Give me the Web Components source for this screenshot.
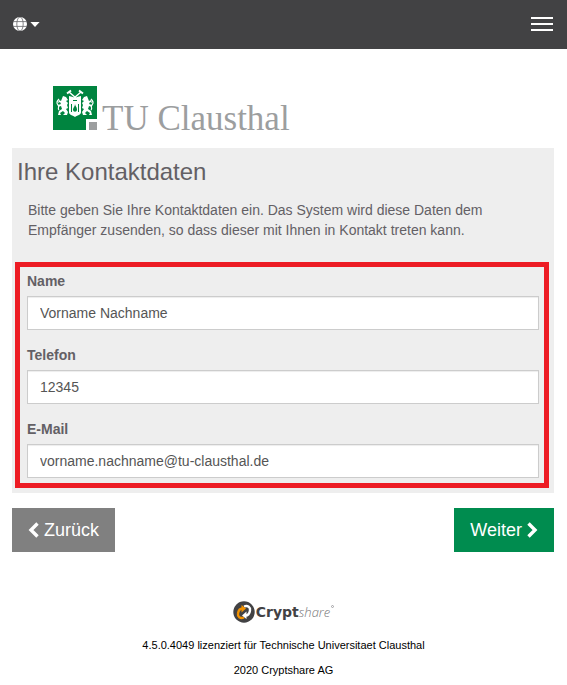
<!DOCTYPE html>
<html lang="de">
<head>
<meta charset="utf-8">
<meta name="viewport" content="width=device-width, initial-scale=1">
<title>Ihre Kontaktdaten</title>
<style>
  body {
    margin: 0;
    background: #fff;
    color: #636065;
    font: 14px/20px "Liberation Sans", Arial, sans-serif;
  }
</style>
</head>
<body>
<contact-page></contact-page>

<script>
class NavBar extends HTMLElement {
  constructor() {
    super();
    this.attachShadow({ mode: 'open' }).innerHTML = `
      <style>
        :host {
          display: flex;
          align-items: center;
          justify-content: space-between;
          height: 48px;
          padding: 0 14px 1px 13px;
          background: #424244;
        }
        button {
          display: flex;
          align-items: center;
          gap: 3px;
          margin: 0;
          padding: 0;
          border: 0;
          background: none;
          cursor: pointer;
        }
        svg { display: block; }
      </style>
      <button type="button" aria-label="Sprache">
        <svg width="14" height="14" viewBox="0 0 14 14">
          <circle cx="7" cy="7" r="7" fill="#fff"/>
          <g fill="none" stroke="#66666a" stroke-width=".8">
            <path d="M0 4.600h14M0 9.400h14"/>
            <ellipse cx="7" cy="7" rx="3.200" ry="7"/>
          </g>
        </svg>
        <svg width="10" height="5" viewBox="0 0 10 5"><path d="M.4 0h9.200L5 5z" fill="#fff"/></svg>
      </button>
      <button type="button" aria-label="Menü">
        <svg width="22" height="14" viewBox="0 0 22 14">
          <path d="M0 1h22M0 7h22M0 13h22" stroke="#fff" stroke-width="2"/>
        </svg>
      </button>
    `;
  }
}
customElements.define('nav-bar', NavBar);

class UniLogo extends HTMLElement {
  constructor() {
    super();
    this.attachShadow({ mode: 'open' }).innerHTML = `
      <style>
        :host {
          display: flex;
          align-items: flex-end;
          gap: 5px;
          height: 44px;
          color: #9c9e9f;
          font: 35px/22px "Liberation Serif", "Times New Roman", serif;
          white-space: nowrap;
        }
        svg { flex: none; display: block; }
      </style>
      <svg width="44" height="44" viewBox="0 0 44 44">
        <path fill="#00843f" d="M0 0h44v33H33v11H0z"/>
        <path fill="#9c9e9f" d="M36 36h8v8h-8z"/>
        <!-- crossed hammers -->
        <g fill="none" stroke="#fff" stroke-width="1.500">
          <path d="M16 6l7 6M28 6l-7 6"/>
          <path stroke-width="2" d="M14 7.500l4-3M30 7.500l-4-3"/>
        </g>
        <!-- shield -->
        <path fill="#fff" d="M16 10l4 1 2 1 2-1 4-1v16c0 3-3 3-6 5c-3-2-6-2-6-5z"/>
        <path fill="#00843f" d="M18 18h1v8h-1zM25 18h1v8h-1zM20 14h4v1h-4zM22 18c0 2 2 3 2 5.500c0 3-4 3-4 0c0-2 2-3 2-5.500z"/>
        <!-- lions on both sides -->
        <g id="lion">
          <path fill="#fff" d="M10 10l3 1 2 3-2 1 2 2-1 2 1 3-2 1 2 3-1 3h-4l2-2-2-2-3 2 1 2H5l1-4 3-2-1-3-3 1v-2l3-1-1-2-2 1 1-3 2 1z"/>
          <path fill="none" stroke="#fff" stroke-width="1.200" d="M6 24c-2-2 1-3-1-5s-1-4 1-6"/>
        </g>
        <use href="#lion" transform="translate(44 0) scale(-1 1)"/>
      </svg>
      <span><slot></slot></span>
    `;
  }
}
customElements.define('uni-logo', UniLogo);

class TextField extends HTMLElement {
  connectedCallback() {
    this.attachShadow({ mode: 'open' }).innerHTML = `
      <style>
        :host { display: block; }
        label {
          display: block;
          margin-bottom: 5px;
          font-weight: bold;
        }
        input {
          display: block;
          box-sizing: border-box;
          width: 100%;
          height: 34px;
          margin: 0;
          padding: 6px 12px;
          border: 1px solid #ccc;
          border-radius: 0;
          background: #fff;
          box-shadow: inset 0 1px 1px rgba(0, 0, 0, .075);
          color: #555;
          font: inherit;
        }
      </style>
      <label for="field">${this.getAttribute('label')}</label>
      <input id="field" type="${this.getAttribute('type') || 'text'}" value="${this.getAttribute('value')}">
    `;
  }
}
customElements.define('text-field', TextField);

class NavButton extends HTMLElement {
  connectedCallback() {
    const back = this.hasAttribute('back');
    const icon = `
      <svg width="12" height="16" viewBox="0 0 12 16">
        <path d="${back ? 'M9.500 1.500L3 8l6.500 6.500' : 'M2.500 1.500L9 8l-6.500 6.500'}" fill="none" stroke="#fff" stroke-width="3.400"/>
      </svg>`;
    this.attachShadow({ mode: 'open' }).innerHTML = `
      <style>
        :host { display: block; }
        button {
          display: flex;
          align-items: center;
          gap: 4px;
          height: 44px;
          margin: 0;
          padding: 0 16px;
          border: 0;
          background: ${back ? '#808080' : '#008c4f'};
          color: #fff;
          font: 18px/24px "Liberation Sans", Arial, sans-serif;
          cursor: pointer;
        }
      </style>
      <button type="button">${back ? icon : ''}<span><slot></slot></span>${back ? '' : icon}</button>
    `;
  }
}
customElements.define('nav-button', NavButton);

class ContactPanel extends HTMLElement {
  constructor() {
    super();
    this.attachShadow({ mode: 'open' }).innerHTML = `
      <style>
        :host {
          display: block;
          padding: 8px 5px 5px 3px;
          background: #eee;
        }
        h1 {
          margin: 0 2px;
          font-size: 24px;
          font-weight: normal;
          line-height: 32px;
        }
        p { margin: 12px 13px 22px; }
        form {
          display: grid;
          gap: 15px;
          padding: 4px 5px 5px 7px;
          border: 5px solid #ed1c24;
        }
      </style>
      <h1><slot name="title"></slot></h1>
      <p><slot name="intro"></slot></p>
      <form><slot></slot></form>
    `;
  }
}
customElements.define('contact-panel', ContactPanel);

class PageFooter extends HTMLElement {
  constructor() {
    super();
    this.attachShadow({ mode: 'open' }).innerHTML = `
      <style>
        :host {
          display: flex;
          flex-direction: column;
          align-items: center;
          gap: 9px;
          color: #000;
          font-size: 11px;
          line-height: 16px;
          text-align: center;
        }
        .brand {
          display: flex;
          align-items: center;
          gap: 1px;
          height: 22px;
          margin-bottom: 5px;
          color: #424244;
          line-height: 22px;
        }
        .brand b { font: bold 14px/22px "DejaVu Sans", sans-serif; }
        .brand i { color: #77777a; font: italic 300 13px/22px "Open Sans", sans-serif; }
        .brand .mark { align-self: flex-start; margin-top: 4px; }
        p { margin: 0; }
      </style>
      <div class="brand">
        <svg width="22" height="22" viewBox="0 0 22 22">
          <circle cx="11" cy="11" r="10.700" fill="#424244"/>
          <g fill="none" stroke-width="2.400">
            <path stroke="#f39200" d="M11 16.500C7 18 4.500 15.500 5 12.500C5.500 9 7 7.500 9.500 7.500"/>
            <path stroke="#fff" d="M11 5.500C15 4 17.500 6.500 17 9.500C16.500 13 15 14.500 12.500 14.500"/>
          </g>
          <path fill="#f39200" d="M8.500 4l4.500 3.500-4.500 4z"/>
          <path fill="#fff" d="M13.500 18L9 14.500l4.500-4z"/>
        </svg>
        <span><b>Crypt</b><i>share</i></span>
        <svg class="mark" width="3" height="3" viewBox="0 0 3 3">
          <circle cx="1.500" cy="1.500" r="1" fill="none" stroke="#88888b" stroke-width=".7"/>
        </svg>
      </div>
      <p>4.5.0.4049 lizenziert für Technische Universitaet Clausthal</p>
      <p>2020 Cryptshare AG</p>
    `;
  }
}
customElements.define('page-footer', PageFooter);

class ContactPage extends HTMLElement {
  constructor() {
    super();
    this.attachShadow({ mode: 'open' }).innerHTML = `
      <style>
        :host { display: block; }
        main { padding: 37px 13px 0 12px; }
        uni-logo { margin: 0 41px 18px; }
        .actions {
          display: flex;
          justify-content: space-between;
          margin: 15px 0 49px;
        }
      </style>
      <nav-bar></nav-bar>
      <main>
        <uni-logo>TU Clausthal</uni-logo>
        <contact-panel>
          <span slot="title">Ihre Kontaktdaten</span>
          <span slot="intro">Bitte geben Sie Ihre Kontaktdaten ein. Das System wird diese Daten dem Empfänger zusenden, so dass dieser mit Ihnen in Kontakt treten kann.</span>
          <text-field label="Name" value="Vorname Nachname"></text-field>
          <text-field label="Telefon" type="tel" value="12345"></text-field>
          <text-field label="E-Mail" type="email" value="vorname.nachname@tu-clausthal.de"></text-field>
        </contact-panel>
        <div class="actions">
          <nav-button back>Zurück</nav-button>
          <nav-button>Weiter</nav-button>
        </div>
      </main>
      <page-footer></page-footer>
    `;
  }
}
customElements.define('contact-page', ContactPage);
</script>
</body>
</html>
